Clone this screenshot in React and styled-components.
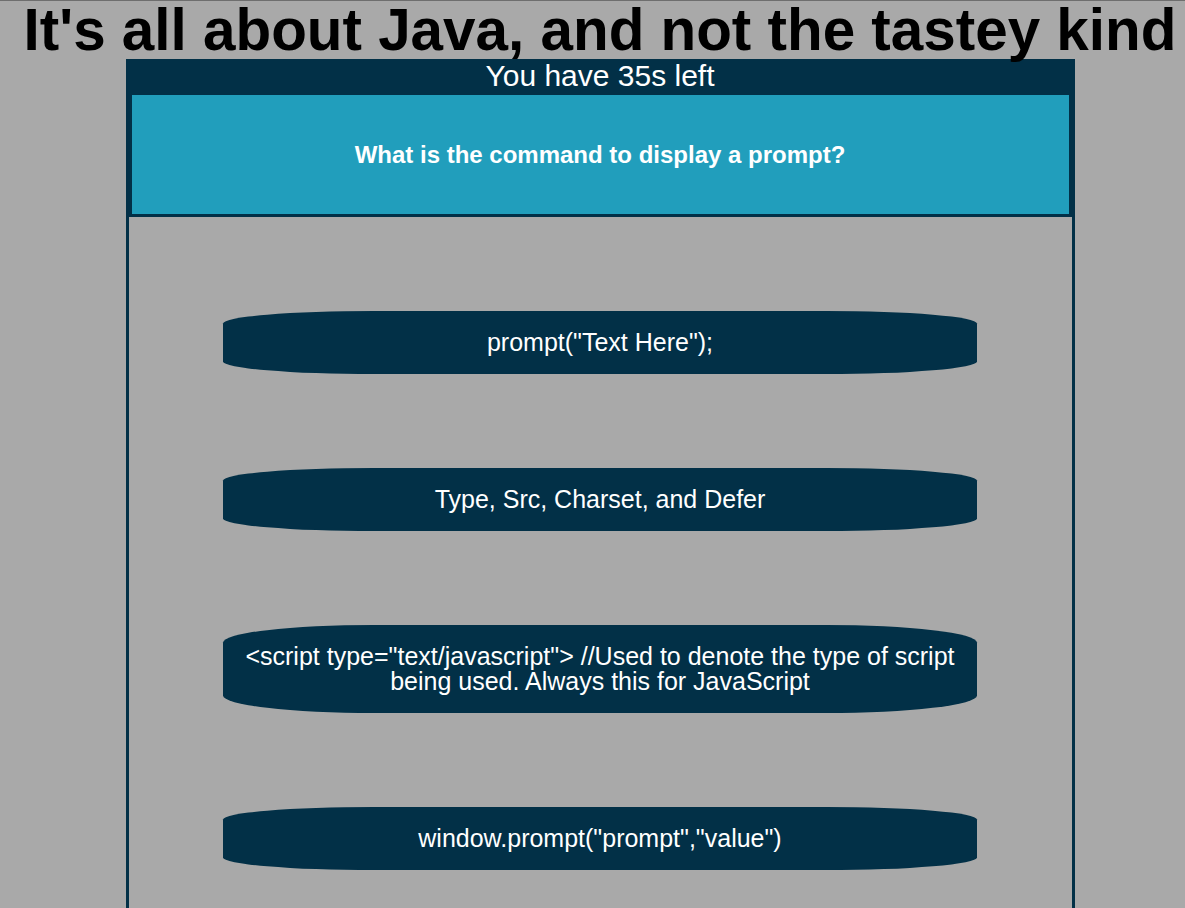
import * as React from 'react'
import styled, { createGlobalStyle } from 'styled-components'

const navy = '#023047'
const teal = '#219ebc'

const GlobalStyle = createGlobalStyle`
  html, body {
    margin: 0;
    background: #a9a9a9;
  }
  body {
    border-top: 1px solid #6e6e6e;
    padding: 0 8px 0 23px;
    font-family: "Liberation Sans", Arial, sans-serif;
  }
`

const answers = [
  'prompt("Text Here");',
  'Type, Src, Charset, and Defer',
  '<script type="text/javascript"> //Used to denote the type of script being used. Always this for JavaScript',
  'window.prompt("prompt","value")',
]

export default function App () {
  return (
    <>
      <GlobalStyle />
      <Heading>It's all about Java, and not the tastey kind</Heading>
      <Quiz>
        <QuizHeader>
          <Timer>You have 35s left</Timer>
          <Question>What is the command to display a prompt?</Question>
        </QuizHeader>
        <Answers>
          {answers.map((text) => (
            <Answer key={text}>{text}</Answer>
          ))}
        </Answers>
      </Quiz>
    </>
  )
}

const Heading = styled.h1`
  margin: 0;
  font-size: 58.4px;
  line-height: 58px;
  font-weight: bold;
  text-align: center;
  color: #000;
  white-space: nowrap;
`

const Quiz = styled.div`
  box-sizing: border-box;
  width: 949px;
  margin: 0 auto;
  border: 3px solid ${navy};
  border-bottom: none;
`

const QuizHeader = styled.div`
  background: ${navy};
  padding: 0 3px 3px;
`

const Timer = styled.div`
  color: #fff;
  font-size: 30px;
  line-height: 28px;
  padding-bottom: 5px;
  text-align: center;
`

const Question = styled.div`
  height: 119px;
  background: ${teal};
  color: #fff;
  font-size: 24px;
  font-weight: bold;
  display: flex;
  align-items: center;
  justify-content: center;
  text-align: center;
`

const Answers = styled.div`
  display: flex;
  flex-direction: column;
  align-items: center;
  gap: 94px;
  padding: 94px 0;
`

const Answer = styled.div`
  box-sizing: border-box;
  width: 80%;
  padding: 19px 12px;
  background: ${navy};
  color: #fff;
  border-radius: 20%;
  font-size: 25px;
  line-height: 25px;
  text-align: center;
  cursor: pointer;
`
